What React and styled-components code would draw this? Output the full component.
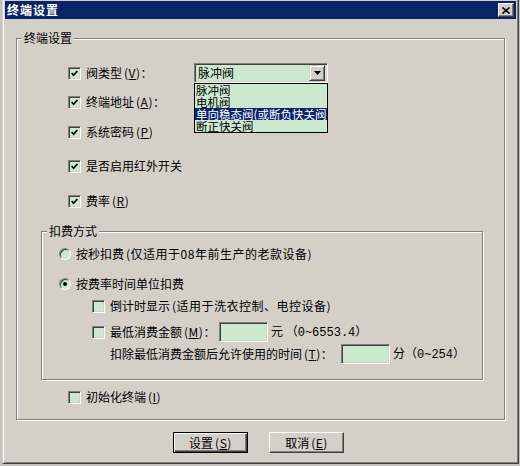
import React from 'react';
import styled, { createGlobalStyle, css } from 'styled-components';

const Global = createGlobalStyle`
  html, body { margin: 0; padding: 0; overflow: hidden; background: #c4c2bc; }
  body {
    font-family: "Noto Sans CJK SC", "Liberation Sans", sans-serif;
    font-size: 12px;
    color: #000;
  }
`;

const GREEN = '#cce8cf';
const FACE = '#d4d0c8';
const NAVY = '#0a246a';

const Window = styled.div`
  box-sizing: border-box;
  width: 517px;
  height: 466px;
  margin: -2px 0 0 2px;
  border: 1px solid;
  border-color: ${FACE} #404040 #404040 ${FACE};
  box-shadow: inset 1px 1px 0 #fff, inset -1px -1px 0 #808080;
  padding: 2px;
  background: ${FACE};
  display: flex;
  flex-direction: column;
`;

const TitleBar = styled.div`
  height: 18px;
  flex: none;
  background: ${NAVY};
  color: #fff;
  display: flex;
  align-items: center;
  padding: 0 2px 0 2px;
  font-weight: bold;
  font-size: 12px;
  letter-spacing: 1px;
`;

const TitleText = styled.span`
  flex: 1;
  line-height: 18px;
`;

const CloseBtn = styled.div`
  box-sizing: border-box;
  width: 16px;
  height: 14px;
  background: ${FACE};
  border: 1px solid;
  border-color: #fff #404040 #404040 #fff;
  box-shadow: inset -1px -1px 0 #808080;
  display: flex;
  align-items: center;
  justify-content: center;
`;

const Client = styled.div`
  flex: 1;
  display: flex;
  flex-direction: column;
  padding: 19px 0 0 11px;
`;

const Group = styled.div`
  position: relative;
  box-sizing: border-box;
  width: ${p => p.$w}px;
  height: ${p => p.$h}px;
  margin-left: ${p => p.$indent || 0}px;
  margin-top: ${p => p.$top || 0}px;
  border: 1px solid #808080;
  box-shadow: 1px 1px 0 #fff, inset 1px 1px 0 #fff;
  display: flex;
  flex-direction: column;
  flex: none;
`;

const Legend = styled.span`
  position: absolute;
  top: -8px;
  left: 5px;
  padding: 0 2px;
  line-height: 14px;
  background: ${FACE};
`;

const Row = styled.div`
  display: flex;
  align-items: center;
  height: 20px;
  flex: none;
  margin-left: ${p => p.$indent || 0}px;
  margin-top: ${p => p.$top || 0}px;
`;

const Label = styled.span`
  margin-left: ${p => (p.$ml === undefined ? 5 : p.$ml)}px;
  white-space: nowrap;
  line-height: 14px;
  ${p => p.$w && css`width: ${p.$w}px; flex: none;`}
`;

const Text = styled.span`
  margin-left: ${p => p.$ml || 0}px;
  white-space: nowrap;
  line-height: 14px;
`;

const Num = styled.span`
  font-family: "Liberation Mono", "DejaVu Sans Mono", monospace;
  font-size: 12px;
`;

const Mn = styled.span`
  margin-left: 2px;
  letter-spacing: 0.5px;
`;

const U = styled.u`
  text-underline-offset: 1px;
`;

const Box = styled.span`
  box-sizing: border-box;
  width: 13px;
  height: 13px;
  flex: none;
  border: 1px solid;
  border-color: #808080 #fff #fff #808080;
  box-shadow: inset 1px 1px 0 #404040, inset -1px -1px 0 ${FACE};
  background: ${GREEN};
  display: flex;
  align-items: center;
  justify-content: center;
`;

const RadioCircle = styled.span`
  box-sizing: border-box;
  width: 12px;
  height: 12px;
  flex: none;
  border-radius: 50%;
  border: 1px solid;
  border-color: #808080 #fff #fff #808080;
  box-shadow: inset 1px 1px 0 #404040;
  background: ${GREEN};
  display: flex;
  align-items: center;
  justify-content: center;
`;

const Dot = styled.span`
  width: 4px;
  height: 4px;
  border-radius: 50%;
  background: #000;
`;

const Sunken = styled.div`
  box-sizing: border-box;
  width: ${p => p.$w}px;
  height: 20px;
  flex: none;
  margin-left: ${p => p.$ml || 0}px;
  border: 1px solid;
  border-color: #808080 #fff #fff #808080;
  box-shadow: inset 1px 1px 0 #404040, inset -1px -1px 0 ${FACE};
  background: ${GREEN};
`;

const ComboWrap = styled.div`
  position: relative;
  flex: none;
`;

const Combo = styled(Sunken)`
  display: flex;
  align-items: center;
  padding: 2px 2px 2px 3px;
`;

const ComboValue = styled.span`
  flex: 1;
  line-height: 14px;
`;

const DropBtn = styled.span`
  box-sizing: border-box;
  width: 16px;
  height: 16px;
  background: ${FACE};
  border: 1px solid;
  border-color: ${FACE} #404040 #404040 ${FACE};
  box-shadow: inset 1px 1px 0 #fff, inset -1px -1px 0 #808080;
  display: flex;
  align-items: center;
  justify-content: center;
`;

const DropList = styled.div`
  position: absolute;
  left: 0;
  top: 20px;
  box-sizing: border-box;
  width: 134px;
  border: 1px solid #000;
  background: ${GREEN};
  z-index: 2;
`;

const Item = styled.div`
  height: 12px;
  line-height: 12px;
  font-size: 11.5px;
  padding-left: 1px;
  white-space: nowrap;
  overflow: hidden;
  ${p => p.$sel && css`background: ${NAVY}; color: #fff;`}
`;

const ButtonRow = styled.div`
  display: flex;
  gap: 21px;
  margin-top: 12px;
  padding-left: 157px;
`;

const Button = styled.div`
  box-sizing: border-box;
  width: 75px;
  height: 21px;
  display: flex;
  align-items: center;
  justify-content: center;
  background: ${FACE};
  border: 1px solid;
  ${p => p.$default
    ? css`
      border-color: #000;
      box-shadow: inset 1px 1px 0 #fff, inset -1px -1px 0 #404040, inset -2px -2px 0 #808080;
    `
    : css`
      border-color: #fff #404040 #404040 #fff;
      box-shadow: inset -1px -1px 0 #808080;
    `}
`;

const Check = ({ checked }) => (
  <Box>
    {checked && (
      <svg width="7" height="7" viewBox="0 0 7 7">
        <path d="M0.6 3 L2.6 5.2 L6.4 1" fill="none" stroke="#000" strokeWidth="1.7" />
      </svg>
    )}
  </Box>
);

const Radio = ({ checked }) => (
  <RadioCircle>{checked && <Dot />}</RadioCircle>
);

const Key = ({ k }) => (
  <Mn>(<U>{k}</U>)</Mn>
);

export default function App() {
  return (
    <>
      <Global />
      <Window>
        <TitleBar>
          <TitleText>终端设置</TitleText>
          <CloseBtn>
            <svg width="8" height="7" viewBox="0 0 8 7">
              <path d="M0.5 0.5 L7.5 6.5 M7.5 0.5 L0.5 6.5" stroke="#000" strokeWidth="1.6" />
            </svg>
          </CloseBtn>
        </TitleBar>
        <Client>
          <Group $w={489} $h={382}>
            <Legend>终端设置</Legend>
            <Row $indent={51} $top={24}>
              <Check checked />
              <Label $w={108}>阀类型<Key k="V" />：</Label>
              <ComboWrap>
                <Combo $w={134}>
                  <ComboValue>脉冲阀</ComboValue>
                  <DropBtn>
                    <svg width="7" height="4" viewBox="0 0 7 4">
                      <path d="M0 0 H7 L3.5 4 Z" fill="#000" />
                    </svg>
                  </DropBtn>
                </Combo>
                <DropList>
                  <Item>脉冲阀</Item>
                  <Item>电机阀</Item>
                  <Item $sel>单向稳态阀(或断负快关阀)</Item>
                  <Item>断正快关阀</Item>
                </DropList>
              </ComboWrap>
            </Row>
            <Row $indent={51} $top={9}>
              <Check checked />
              <Label>终端地址<Key k="A" />：</Label>
            </Row>
            <Row $indent={51} $top={10}>
              <Check checked />
              <Label>系统密码<Key k="P" /></Label>
            </Row>
            <Row $indent={51} $top={14}>
              <Check checked />
              <Label>是否启用红外开关</Label>
            </Row>
            <Row $indent={51} $top={15}>
              <Check checked />
              <Label>费率<Key k="R" /></Label>
            </Row>
            <Group $w={442} $h={149} $indent={24} $top={20}>
              <Legend>扣费方式</Legend>
              <Row $indent={17} $top={12}>
                <Radio />
                <Label>按秒扣费<Mn>(仅适用于08年前生产的老款设备)</Mn></Label>
              </Row>
              <Row $indent={17} $top={10}>
                <Radio checked />
                <Label>按费率时间单位扣费</Label>
              </Row>
              <Row $indent={50} $top={2}>
                <Check />
                <Label>倒计时显示<Mn>(适用于洗衣控制、电控设备)</Mn></Label>
              </Row>
              <Row $indent={50} $top={6}>
                <Check />
                <Label $w={109}>最低消费金额<Key k="M" />：</Label>
                <Sunken $w={49} />
                <Text $ml={3}>元 （<Num>0~6553.4</Num>）</Text>
              </Row>
              <Row $indent={68} $top={2}>
                <Label $ml={0} $w={231}>扣除最低消费金额后允许使用的时间<Key k="T" />：</Label>
                <Sunken $w={49} />
                <Text $ml={3}>分（<Num>0~254</Num>）</Text>
              </Row>
            </Group>
            <Row $indent={51} $top={7}>
              <Check />
              <Label>初始化终端<Key k="I" /></Label>
            </Row>
          </Group>
          <ButtonRow>
            <Button $default>设置<Key k="S" /></Button>
            <Button>取消<Key k="E" /></Button>
          </ButtonRow>
        </Client>
      </Window>
    </>
  );
}
